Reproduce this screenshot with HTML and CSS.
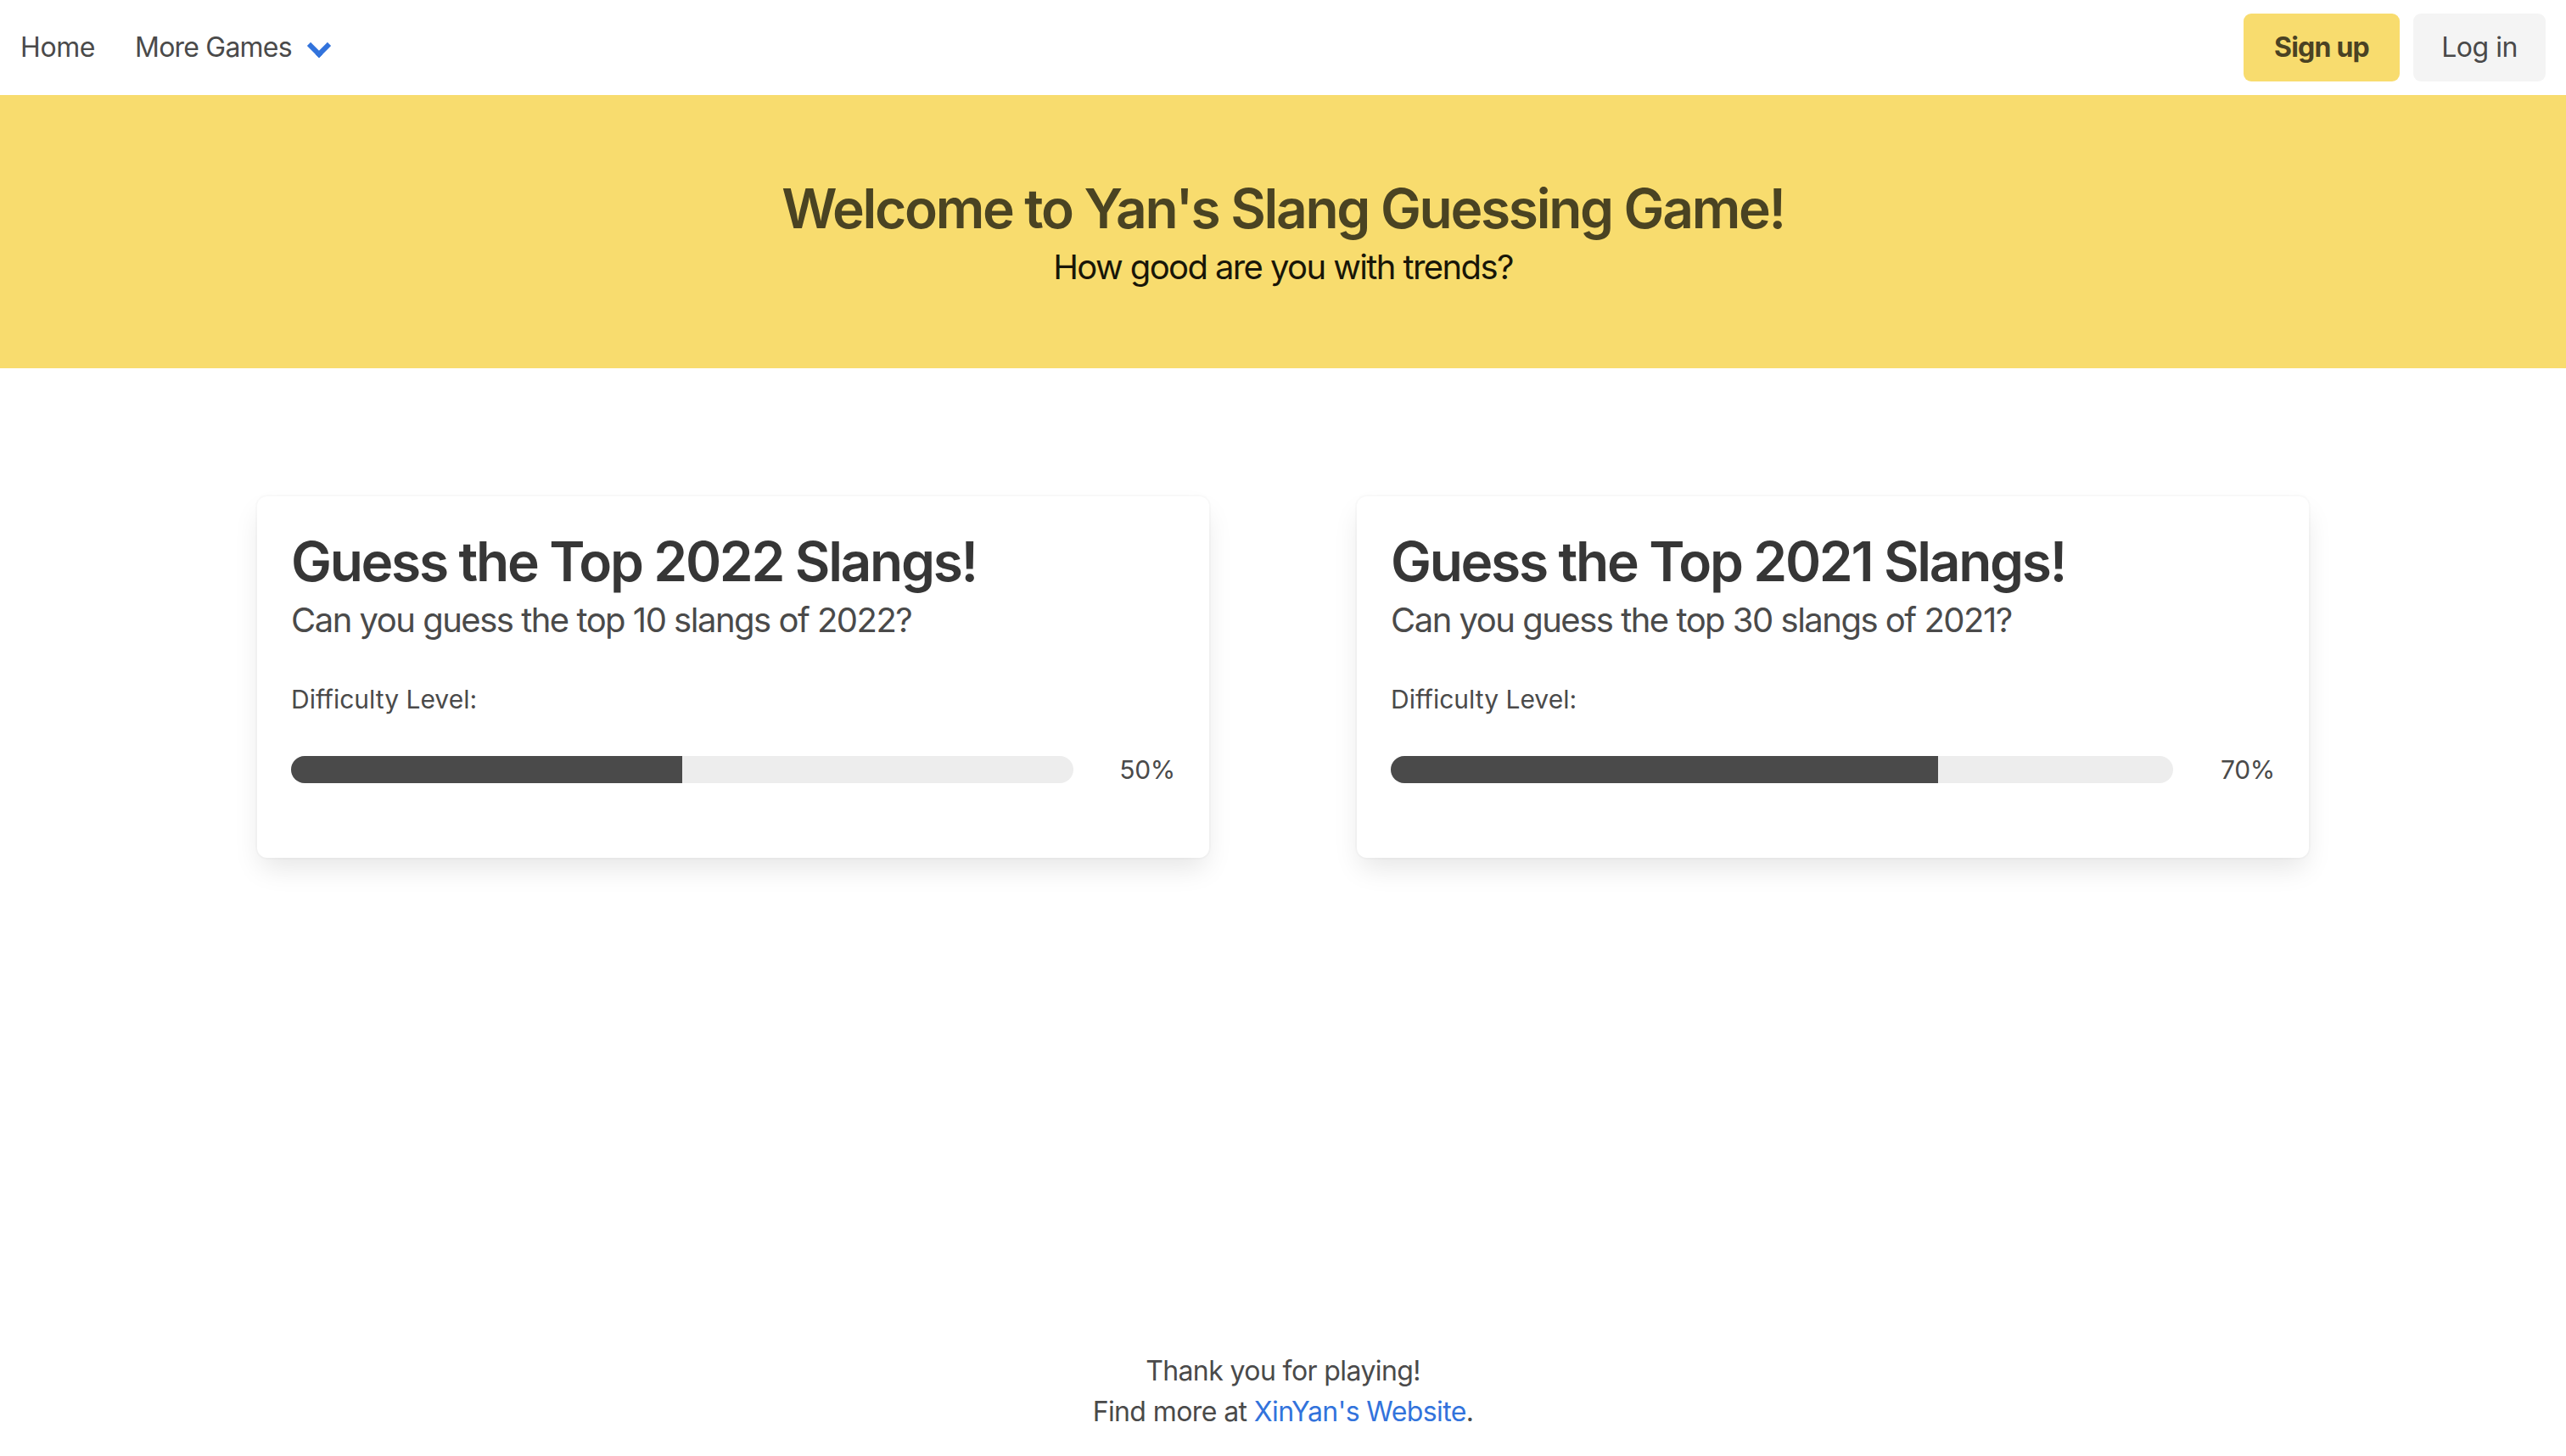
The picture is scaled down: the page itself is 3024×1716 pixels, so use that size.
FILE: index.html
```html
<!DOCTYPE html>
<html lang="en">
<head>
<meta charset="utf-8">
<title>Yan's Slang Guessing Game</title>
<link rel="stylesheet" href="styles.css">
</head>
<body>
<div class="page">
  <nav class="navbar">
    <div class="navbar-start">
      <a class="navbar-item" href="#">Home</a>
      <a class="navbar-item navbar-link" href="#">More Games<span class="arrow"></span></a>
    </div>
    <div class="navbar-end">
      <a class="button is-warning" href="#">Sign up</a>
      <a class="button is-light" href="#">Log in</a>
    </div>
  </nav>

  <section class="hero">
    <h1 class="hero-title">Welcome to Yan's Slang Guessing Game!</h1>
    <p class="hero-subtitle">How good are you with trends?</p>
  </section>

  <main class="main">
    <div class="cards">
      <div class="box">
        <h2 class="box-title">Guess the Top 2022 Slangs!</h2>
        <p class="box-subtitle">Can you guess the top 10 slangs of 2022?</p>
        <p class="box-label">Difficulty Level:</p>
        <div class="progress-row">
          <div class="progress"><div class="progress-fill" style="width: 50%"></div></div>
          <span class="progress-value">50%</span>
        </div>
      </div>
      <div class="box">
        <h2 class="box-title">Guess the Top 2021 Slangs!</h2>
        <p class="box-subtitle">Can you guess the top 30 slangs of 2021?</p>
        <p class="box-label">Difficulty Level:</p>
        <div class="progress-row">
          <div class="progress"><div class="progress-fill" style="width: 70%"></div></div>
          <span class="progress-value">70%</span>
        </div>
      </div>
    </div>
  </main>

  <footer class="footer">
    <p>Thank you for playing!</p>
    <p>Find more at <a class="link" href="#">XinYan's Website</a>.</p>
  </footer>
</div>
</body>
</html>
```

FILE: styles.css
```css
* { box-sizing: border-box; }
html, body { margin: 0; padding: 0; }
body {
  font-family: Inter, "Noto Sans", "Liberation Sans", sans-serif;
  color: #4a4a4a;
  background: #ffffff;
  font-size: 32px;
  line-height: 1.5;
}
a { text-decoration: none; }
p, h1, h2 { margin: 0; }

.page {
  min-height: 100vh;
  display: flex;
  flex-direction: column;
}

/* navbar */
.navbar {
  height: 112px;
  display: flex;
  align-items: center;
  justify-content: space-between;
  background: #fff;
}
.navbar-start { display: flex; align-items: center; height: 100%; }
.navbar-item {
  color: #4a4a4a;
  padding: 0 24px;
  display: flex;
  align-items: center;
  height: 100%;
  letter-spacing: -0.4px;
  white-space: nowrap;
}
.navbar-link { padding-left: 23px; letter-spacing: -0.8px; }
.arrow {
  display: inline-block;
  width: 20px;
  height: 20px;
  border: 6px solid #3273dc;
  border-right: 0;
  border-top: 0;
  transform: rotate(-45deg);
  margin-left: 22px;
  margin-top: -5px;
}
.navbar-end { display: flex; align-items: center; gap: 16px; padding-right: 24px; }
.button {
  height: 80px;
  display: inline-flex;
  align-items: center;
  justify-content: center;
  padding: 0;
  border: 1px solid transparent;
  border-radius: 9px;
  font-size: 32px;
  letter-spacing: -0.5px;
  white-space: nowrap;
}
.button.is-warning {
  background: #f8dc6e;
  color: #4a4223;
  font-weight: 700;
  width: 184px;
  letter-spacing: -0.8px;
}
.button.is-light {
  background: #f4f4f4;
  color: #494949;
  width: 156px;
}

/* hero */
.hero {
  background: #f8dc6e;
  text-align: center;
  padding: 98px 48px 94px;
}
.hero-title {
  font-size: 64px;
  line-height: 72px;
  font-weight: 600;
  color: #4a4322;
  letter-spacing: -2.3px;
}
.hero-subtitle {
  margin-top: 8px;
  font-size: 40px;
  line-height: 50px;
  color: #181608;
  letter-spacing: -1.6px;
}

/* cards */
.main { flex: 1; padding-top: 151px; }
.cards {
  width: 2418px;
  margin: 0 auto;
  display: grid;
  grid-template-columns: 1fr 1fr;
  column-gap: 174px;
}
.box {
  background: #fff;
  border-radius: 12px;
  padding: 41px 40px 40px;
  box-shadow: 0 16px 32px -4px rgba(10, 10, 10, 0.1), 0 0 0 2px rgba(10, 10, 10, 0.02);
}
.box-title {
  font-size: 64px;
  line-height: 72px;
  font-weight: 600;
  color: #363636;
  letter-spacing: -2.3px;
}
.box-subtitle {
  margin-top: 8px;
  font-size: 40px;
  line-height: 50px;
  color: #4a4a4a;
  letter-spacing: -1.5px;
}
.box-label {
  margin-top: 46px;
  font-size: 30px;
  line-height: 45px;
  color: #4a4a4a;
  letter-spacing: 0;
}
.progress-row {
  margin-top: 44px;
  margin-bottom: 48px;
  display: flex;
  align-items: center;
}
.progress {
  flex: 1;
  height: 32px;
  border-radius: 16px;
  background: #ededed;
  overflow: hidden;
}
.progress-fill {
  height: 100%;
  background: #4a4a4a;
}
.progress-value {
  width: 120px;
  text-align: right;
  font-size: 30px;
  line-height: 32px;
  color: #4a4a4a;
  letter-spacing: -0.3px;
}

/* footer */
.footer {
  text-align: center;
  padding: 0 48px 28px;
  color: #4a4a4a;
  font-size: 32px;
  line-height: 48px;
  letter-spacing: -0.6px;
}
.link { color: #3273dc; }
```
